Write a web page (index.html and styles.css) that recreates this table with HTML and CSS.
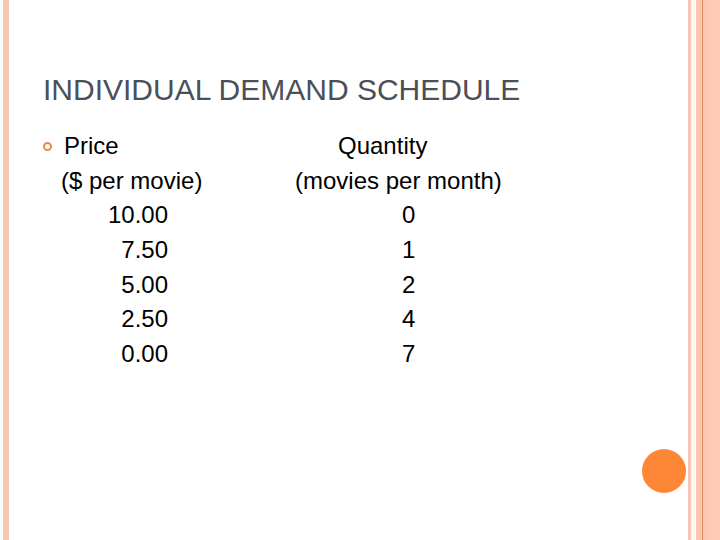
FILE: index.html
```html
<!DOCTYPE html>
<html>
<head>
<meta charset="utf-8">
<link rel="stylesheet" href="styles.css">
</head>
<body>
<div class="slide">
  <h1 class="title">INDIVIDUAL DEMAND SCHEDULE</h1>
  <div class="list">
    <span class="bullet"></span>
    <div class="table">
      <span class="c1 head">Price</span><span class="c2 head">Quantity</span>
      <span class="c1 unit">($ per movie)</span><span class="c2 unit">(movies per month)</span>
      <span class="c1 num">10.00</span><span class="c2 num">0</span>
      <span class="c1 num">7.50</span><span class="c2 num">1</span>
      <span class="c1 num">5.00</span><span class="c2 num">2</span>
      <span class="c1 num">2.50</span><span class="c2 num">4</span>
      <span class="c1 num">0.00</span><span class="c2 num">7</span>
    </div>
  </div>
  <span class="dot"></span>
</div>
</body>
</html>
```
FILE: styles.css
```css
html, body {
  margin: 0;
  padding: 0;
}
body {
  width: 720px;
  height: 540px;
  overflow: hidden;
  background:
    linear-gradient(to right,
      #ffffff 0, #ffffff 3px,
      #f8c6b3 3px, #f8c6b3 9px,
      transparent 9px, transparent 688px,
      #f8c6b3 688px, #f8c6b3 691px,
      #fff8f2 691px, #fff8f2 696px,
      #fbc6b2 696px, #fbc6b2 702px,
      #df8c62 702px, #df8c62 703px,
      #fbc6b2 703px, #fbc6b2 708px,
      #ffc9b6 708px, #ffc9b6 720px),
    #ffffff;
  font-family: "Liberation Sans", Arial, sans-serif;
}
.slide {
  position: relative;
  width: 720px;
  height: 540px;
  padding: 72px 0 0 43px;
  box-sizing: border-box;
}
.title {
  margin: 0;
  font-weight: normal;
  font-size: 30px;
  line-height: 36px;
  color: #4b4f58;
  white-space: nowrap;
}
.list {
  display: flex;
  align-items: flex-start;
  margin-top: 21px;
  margin-left: 0;
}
.bullet {
  flex: none;
  width: 5px;
  height: 5px;
  border: 2.5px solid #ea8a4a;
  border-radius: 50%;
  margin-top: 13px;
  margin-right: 9px;
}
.table {
  display: grid;
  grid-template-columns: 107px 300px;
  grid-auto-rows: 34.7px;
  font-size: 24px;
  line-height: 34.7px;
  color: #000;
  white-space: nowrap;
}
.c1, .c2 {
  min-width: 0;
}
.c1.head { padding-left: 3px; }
.c2.head { padding-left: 170px; }
.c1.unit { padding-left: 0; }
.c2.unit { padding-left: 127px; }
.c1.num { text-align: right; }
.c2.num { padding-left: 234px; }
.dot {
  position: absolute;
  left: 642px;
  top: 449px;
  width: 44px;
  height: 44px;
  border-radius: 50%;
  background: #fd8637;
}
```
